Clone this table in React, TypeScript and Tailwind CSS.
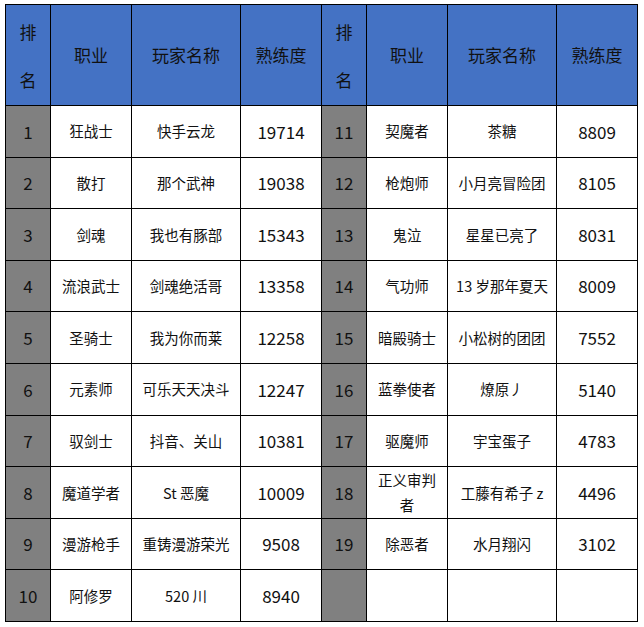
import React from 'react';

type Row = { rank: number; job: React.ReactNode; name: string; score: number };

const left: Row[] = [
  { rank: 1, job: '狂战士', name: '快手云龙', score: 19714 },
  { rank: 2, job: '散打', name: '那个武神', score: 19038 },
  { rank: 3, job: '剑魂', name: '我也有豚部', score: 15343 },
  { rank: 4, job: '流浪武士', name: '剑魂绝活哥', score: 13358 },
  { rank: 5, job: '圣骑士', name: '我为你而莱', score: 12258 },
  { rank: 6, job: '元素师', name: '可乐天天决斗', score: 12247 },
  { rank: 7, job: '驭剑士', name: '抖音、关山', score: 10381 },
  { rank: 8, job: '魔道学者', name: 'St 恶魔', score: 10009 },
  { rank: 9, job: '漫游枪手', name: '重铸漫游荣光', score: 9508 },
  { rank: 10, job: '阿修罗', name: '520 川', score: 8940 },
];

const right: (Row | null)[] = [
  { rank: 11, job: '契魔者', name: '茶糖', score: 8809 },
  { rank: 12, job: '枪炮师', name: '小月亮冒险团', score: 8105 },
  { rank: 13, job: '鬼泣', name: '星星已亮了', score: 8031 },
  { rank: 14, job: '气功师', name: '13 岁那年夏天', score: 8009 },
  { rank: 15, job: '暗殿骑士', name: '小松树的团团', score: 7552 },
  { rank: 16, job: '蓝拳使者', name: '燎原丿', score: 5140 },
  { rank: 17, job: '驱魔师', name: '宇宝蛋子', score: 4783 },
  {
    rank: 18,
    job: (
      <span className="flex flex-col items-center leading-[25px]">
        <span>正义审判</span>
        <span>者</span>
      </span>
    ),
    name: '工藤有希子 z',
    score: 4496,
  },
  { rank: 19, job: '除恶者', name: '水月翔闪', score: 3102 },
  null,
];

const cell = 'border border-black text-center align-middle p-0';

function Header() {
  return (
    <>
      <th className={`${cell} bg-[#4472c4] font-normal`}>
        <div className="flex flex-col items-center gap-[27px] text-[17px] leading-[21px]">
          <span>排</span>
          <span>名</span>
        </div>
      </th>
      <th className={`${cell} bg-[#4472c4] font-normal text-[17px]`}>职业</th>
      <th className={`${cell} bg-[#4472c4] font-normal text-[17px]`}>玩家名称</th>
      <th className={`${cell} bg-[#4472c4] font-normal text-[17px]`}>熟练度</th>
    </>
  );
}

function Cells({ row }: { row: Row | null }) {
  return (
    <>
      <td className={`${cell} bg-[#808080] text-[17px]`}>{row?.rank}</td>
      <td className={`${cell} bg-white text-[14.5px]`}>{row?.job}</td>
      <td className={`${cell} bg-white text-[14.5px]`}>{row?.name}</td>
      <td className={`${cell} bg-white text-[17px]`}>{row?.score}</td>
    </>
  );
}

export default function App() {
  return (
    <div
      className="w-[644px] h-[627px] bg-white pl-[5px] pt-[4px] text-[#111]"
      style={{ fontFamily: '"Noto Sans CJK SC", "Noto Sans", sans-serif' }}
    >
      <table className="table-fixed border-collapse w-[632px]">
        <colgroup>
          <col className="w-[45px]" />
          <col className="w-[81px]" />
          <col className="w-[109px]" />
          <col className="w-[81px]" />
          <col className="w-[45px]" />
          <col className="w-[81px]" />
          <col className="w-[109px]" />
          <col className="w-[81px]" />
        </colgroup>
        <tbody>
          <tr className="h-[101px]">
            <Header />
            <Header />
          </tr>
          {left.map((r, i) => (
            <tr key={r.rank} className="h-[51.6px]">
              <Cells row={r} />
              <Cells row={right[i]} />
            </tr>
          ))}
        </tbody>
      </table>
    </div>
  );
}
